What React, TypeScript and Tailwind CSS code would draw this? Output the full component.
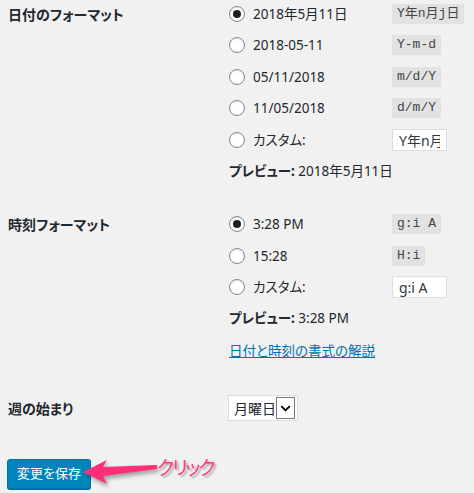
import { ChevronDown } from "lucide-react"

const font = "font-['Noto_Sans','Noto_Sans_CJK_JP',sans-serif] [font-feature-settings:'palt']"
const mono = "font-['Liberation_Mono','Noto_Sans_CJK_JP',monospace]"

type Opt = { label: string; code?: string; checked?: boolean; custom?: string }

const dateOpts: Opt[] = [
  { label: "2018年5月11日", code: "Y年n月j日", checked: true },
  { label: "2018-05-11", code: "Y-m-d" },
  { label: "05/11/2018", code: "m/d/Y" },
  { label: "11/05/2018", code: "d/m/Y" },
  { label: "カスタム:", custom: "Y年n月j日" },
]

const timeOpts: Opt[] = [
  { label: "3:28 PM", code: "g:i A", checked: true },
  { label: "15:28", code: "H:i" },
  { label: "カスタム:", custom: "g:i A" },
]

function Radio({ checked }: { checked?: boolean }) {
  return (
    <span className="w-4 h-4 rounded-full border border-[#7e8993] bg-white flex items-center justify-center shadow-[inset_0_1px_2px_rgba(0,0,0,0.1)]">
      {checked && <span className="w-2 h-2 rounded-full bg-[#1e1e1e]" />}
    </span>
  )
}

function OptionRow({ o }: { o: Opt }) {
  return (
    <div className="flex items-center h-[31.5px]">
      <div className="w-[164px] flex items-center gap-2 pl-px">
        <Radio checked={o.checked} />
        <span className="text-[13.5px]">{o.label}</span>
      </div>
      {o.code && (
        <code className={`${mono} text-[13px] leading-[20px] px-[5px] bg-[#e2e2e2] text-[#444]`}>
          {o.code}
        </code>
      )}
      {o.custom && (
        <input
          readOnly
          value={o.custom}
          className={`${font} w-[55px] h-[22px] bg-white border border-[#ddd] px-[6px] text-[14px] text-[#32373c] outline-none`}
        />
      )}
    </div>
  )
}

export default function App() {
  return (
    <div className={`${font} w-[474px] h-[493px] bg-[#f1f1f1] text-[#23282d] overflow-hidden`}>
      {/* date format */}
      <div className="flex -mt-[2px]">
        <div className="w-[228px] pl-2 pt-[6px] text-[14px] font-bold">日付のフォーマット</div>
        <div className="flex-1">
          {dateOpts.map(o => (
            <OptionRow key={o.label} o={o} />
          ))}
          <div className="h-[31px] flex items-center pl-px text-[13.5px]">
            <b>プレビュー:</b>&nbsp;2018年5月11日
          </div>
        </div>
      </div>

      {/* time format */}
      <div className="flex mt-[22px]">
        <div className="w-[228px] pl-2 pt-[5px] text-[14px] font-bold">時刻フォーマット</div>
        <div className="flex-1">
          {timeOpts.map(o => (
            <OptionRow key={o.label} o={o} />
          ))}
          <div className="h-[31px] flex items-center pl-px text-[13.5px]">
            <b>プレビュー:</b>&nbsp;3:28 PM
          </div>
          <div className="h-[34px] flex items-center pl-px">
            <a href="#" className="text-[13.5px] text-[#0073aa] underline">
              日付と時刻の書式の解説
            </a>
          </div>
        </div>
      </div>

      {/* week start */}
      <div className="flex items-center mt-[27px] h-[26px]">
        <div className="w-[228px] pl-2 text-[14px] font-bold">週の始まり</div>
        <div className="h-[26px] w-[70px] flex items-center bg-white border border-[#ddd] pl-[5px] pr-[2px]">
          <span className="text-[14px] flex-1">月曜日</span>
          <span className="w-[19px] h-[22px] border border-[#777] flex items-center justify-center">
            <ChevronDown size={15} strokeWidth={3} className="text-black" />
          </span>
        </div>
      </div>

      {/* save */}
      <div className="relative mt-[38px] pl-[7px]">
        <button className="h-[30px] w-[84px] rounded-[3px] bg-[#0085ba] border border-[#0073aa] shadow-[0_1px_0_#006799] text-white text-[13px]">
          変更を保存
        </button>
        <svg
          width="82"
          height="32"
          viewBox="0 0 82 32"
          className="absolute left-[80px] top-[-3px] drop-shadow-[2px_3px_2px_rgba(0,0,0,0.35)]"
        >
          <polygon points="3,16 27,4 23,11 77,9 77,13 23,20 27,28" fill="#ff2e7a" />
        </svg>
        <span className="absolute left-[157px] top-[-6px] text-[19px] tracking-[-2px] text-[#ff3a80] [text-shadow:2px_2px_2px_rgba(0,0,0,0.3)] font-['Noto_Sans_CJK_JP',sans-serif]">
          クリック
        </span>
      </div>
    </div>
  )
}
